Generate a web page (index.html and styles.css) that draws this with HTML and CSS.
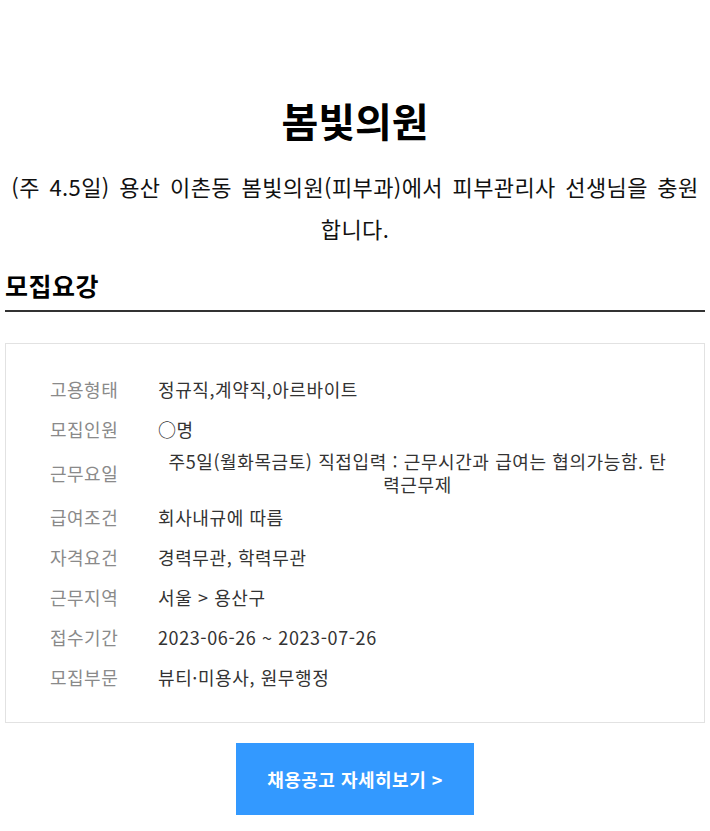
FILE: index.html
```html
<!DOCTYPE html>
<html lang="ko">
<head>
<meta charset="utf-8">
<title>봄빛의원</title>
<link rel="stylesheet" href="styles.css">
</head>
<body>
<div class="page">
  <header class="intro">
    <h1 class="title">봄빛의원</h1>
    <p class="lead">(주 4.5일) 용산 이촌동 봄빛의원(피부과)에서 피부관리사 선생님을 충원합니다.</p>
  </header>
  <section class="recruit">
    <h2 class="section-title">모집요강</h2>
    <div class="info-box">
      <div class="row"><span class="label">고용형태</span><span class="value">정규직,계약직,아르바이트</span></div>
      <div class="row"><span class="label">모집인원</span><span class="value">○명</span></div>
      <div class="row row-multi"><span class="label">근무요일</span><span class="value value-center">주5일(월화목금토) 직접입력 : 근무시간과 급여는 협의가능함. 탄력근무제</span></div>
      <div class="row"><span class="label">급여조건</span><span class="value">회사내규에 따름</span></div>
      <div class="row"><span class="label">자격요건</span><span class="value">경력무관, 학력무관</span></div>
      <div class="row"><span class="label">근무지역</span><span class="value">서울 &gt; 용산구</span></div>
      <div class="row"><span class="label">접수기간</span><span class="value">2023-06-26 ~ 2023-07-26</span></div>
      <div class="row"><span class="label">모집부문</span><span class="value">뷰티·미용사, 원무행정</span></div>
    </div>
    <div class="cta-wrap">
      <a class="cta" href="#">채용공고 자세히보기 &gt;</a>
    </div>
  </section>
</div>
</body>
</html>
```

FILE: styles.css
```css
* { box-sizing: border-box; }
html, body { margin: 0; padding: 0; background: #fff; }
body {
  font-family: "Noto Sans CJK KR", "Noto Sans", sans-serif;
  color: #222;
}
.page {
  padding: 95px 5px 0;
}
.intro { text-align: center; }
.title {
  margin: 0;
  font-size: 40px;
  line-height: 50px;
  font-weight: 700;
  color: #000;
}
.lead {
  margin: 20px 0 0;
  font-size: 22px;
  line-height: 42px;
  color: #111;
  letter-spacing: 0.4px;
  word-spacing: 3px;
}
.section-title {
  margin: 21px 0 0;
  padding-bottom: 10px;
  font-size: 25px;
  line-height: 30px;
  font-weight: 700;
  letter-spacing: 0.5px;
  color: #000;
  border-bottom: 2px solid #333;
}
.info-box {
  margin-top: 31px;
  border: 1px solid #e2e2e2;
  padding: 25px 27px 25px 44px;
}
.row {
  display: flex;
  align-items: center;
  font-size: 18px;
  line-height: 24px;
  letter-spacing: 0.5px;
  padding: 8px 0;
}
.row-multi { padding: 1px 0; }
.row-multi .value { line-height: 23px; }
.label {
  flex: 0 0 108px;
  color: #8a8a8a;
}
.value {
  flex: 1;
  color: #333;
  letter-spacing: 0.6px;
}
.value-center {
  text-align: center;
  padding: 0 7px;
}
.cta-wrap {
  display: flex;
  justify-content: center;
  margin-top: 20px;
}
.cta {
  display: flex;
  align-items: center;
  justify-content: center;
  width: 238px;
  height: 72px;
  background: #3399ff;
  color: #fff;
  font-size: 18px;
  font-weight: 700;
  letter-spacing: 0.5px;
  text-decoration: none;
}
```
